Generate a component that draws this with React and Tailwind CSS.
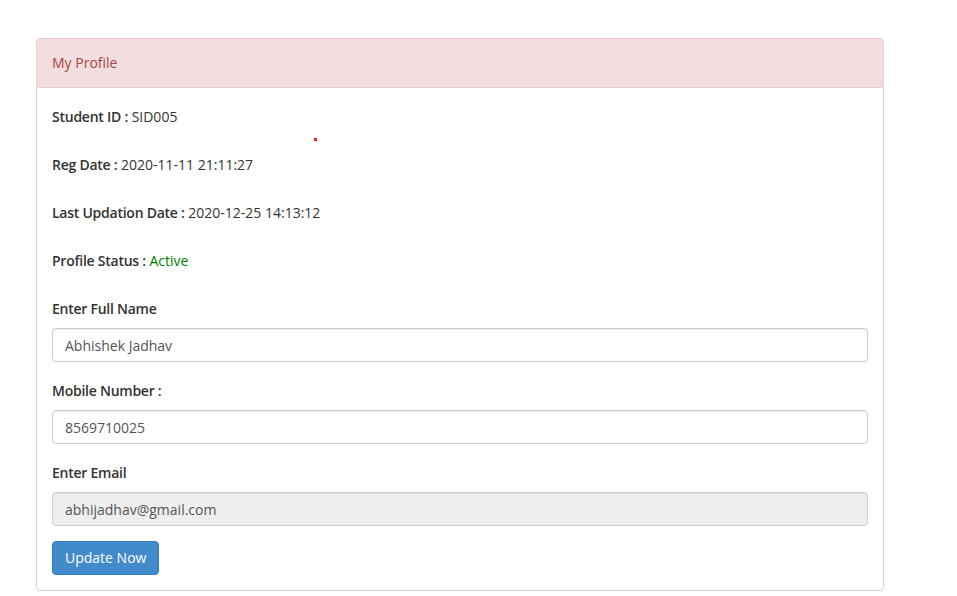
import React from 'react';

const rows = [
    { label: 'Student ID :', value: 'SID005' },
    { label: 'Reg Date :', value: '2020-11-11 21:11:27' },
    { label: 'Last Updation Date :', value: '2020-12-25 14:13:12' },
];

const inputCls =
    'block w-full h-[34px] px-[12px] border border-[#ccc] rounded-[4px] text-[#555] shadow-[inset_0_1px_1px_rgba(0,0,0,0.075)] outline-none';

export default function App() {
    return (
        <div
            className="relative min-h-screen bg-white pl-[36px] pr-[73px] pt-[38px] text-[14px] text-[#333]"
            style={{ fontFamily: '"Open Sans", "Liberation Sans", sans-serif' }}
        >
            {/* stray red dot from the original page */}
            <span className="absolute left-[314px] top-[138px] h-[3px] w-[3px] bg-[#ee1c25]" />

            <div className="rounded-[4px] border border-[#ebccd1] bg-white">
                <div className="h-[49px] flex items-center px-[15px] bg-[#f2dede] border-b border-[#ebccd1] rounded-t-[3px] text-[#a94442] leading-[20px]">
                    My Profile
                </div>

                <div className="px-[15px] pt-[19px] pb-[15px] leading-[20px]">
                    {rows.map((r) => (
                        <p key={r.label} className="mb-[28px]">
                            <span className="font-semibold tracking-[-0.25px]">{r.label}</span> {r.value}
                        </p>
                    ))}
                    <p className="mb-[28px]">
                        <span className="font-semibold tracking-[-0.25px]">Profile Status :</span>{' '}
                        <span className="text-[#008000]">Active</span>
                    </p>

                    <label className="block font-semibold tracking-[-0.25px] mb-[9px]">Enter Full Name</label>
                    <input defaultValue="Abhishek Jadhav" className={inputCls + ' mb-[19px]'} />

                    <label className="block font-semibold tracking-[-0.25px] mb-[9px]">Mobile Number :</label>
                    <input defaultValue="8569710025" className={inputCls + ' mb-[19px]'} />

                    <label className="block font-semibold tracking-[-0.25px] mb-[9px]">Enter Email</label>
                    <input defaultValue="abhijadhav@gmail.com" readOnly className={inputCls + ' bg-[#eee] mb-[15px]'} />

                    <button className="h-[34px] px-[12px] bg-[#428bca] border border-[#357ebd] rounded-[4px] text-white">
                        Update Now
                    </button>
                </div>
            </div>
        </div>
    );
}
